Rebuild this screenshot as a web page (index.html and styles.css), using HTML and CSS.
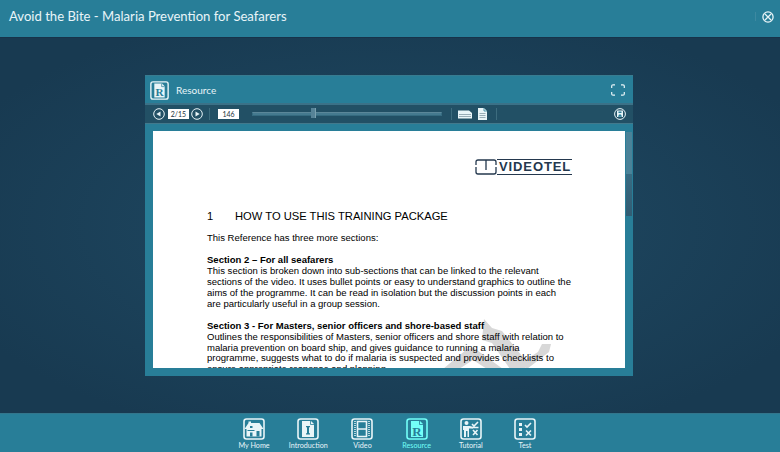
FILE: index.html
```html
<!DOCTYPE html>
<html lang="en">
<head>
<meta charset="utf-8">
<title>Avoid the Bite - Malaria Prevention for Seafarers</title>
<link rel="stylesheet" href="styles.css">
</head>
<body>
<header class="top"><h1>Avoid the Bite - Malaria Prevention for Seafarers</h1><i class="top-sep"></i>
<svg class="close" viewBox="0 0 12 12"><circle cx="6" cy="6" r="5.1"/><path d="M3 3l6 6M9 3l-6 6"/></svg></header>
<main>
<section class="panel">
<div class="panel-head">
<svg class="r-icon" viewBox="0 0 22 22"><use href="#resource"/></svg><h2>Resource</h2>
<svg class="full" viewBox="0 0 14 12"><path d="M4 .8H2Q.7.8.7 2v2M.7 8v2q0 1.2 1.3 1.2h2M10 .8h2q1.3 0 1.3 1.2v2M13.300 8v2q0 1.200-1.300 1.200h-2"/></svg>
</div>
<div class="tools">
<svg class="round" viewBox="0 0 12 12"><circle cx="6" cy="6" r="5.3"/><path class="solid" d="M3.300 6L7.500 3.400v5.200z"/></svg>
<span class="field">2/15</span>
<svg class="round" viewBox="0 0 12 12"><circle cx="6" cy="6" r="5.3"/><path class="solid" d="M8.700 6L4.500 3.400v5.200z"/></svg>
<i class="sep sep-a"></i><span class="field zoom">146</span>
<div class="slider"><i class="thumb"></i></div><i class="sep sep-b"></i>
<svg class="wide" viewBox="0 0 14 9"><path class="solid" d="M0 .5h11l3 2.500v5.500H0z"/><path class="rule" d="M1 4.500h12M1 6.500h12"/></svg>
<svg class="tall" viewBox="0 0 9 12"><path class="solid" d="M0 0h6l3 3v9H0z"/><path class="rule" d="M1.500 5.500h6M1.500 7.500h6M1.500 9.500h6"/><path class="fold" d="M6 0v3h3"/></svg>
<i class="sep sep-c"></i>
<svg class="round save" viewBox="0 0 12 12"><circle cx="6" cy="6" r="5.400"/><path class="solid" d="M3 2.500h6v6.500H3z"/><path class="ink" d="M4.500 3.500h3v1.500h-3zM4 8.800l1-2.300h2l1 2.300z"/></svg>
</div>
<div class="viewer">
<article class="sheet">
<svg class="mark" viewBox="0 0 115 50"><path d="M44 0l8 9 10 3 28 35-8 3h-12L52 24l-10-3zM3 50l24-20 7-1 7 5 22 16H47l-14-9-14 9zM80 44l18-11 4-8h9l-2 8-22 17z"/></svg>
<div class="logo"><svg viewBox="0 0 22 16"><path d="M1 6V3q0-2 2-2h16q2 0 2 2v3M1 8v5q0 2 2 2h16q2 0 2-2V8M11 1v10"/></svg><b>VIDEOTEL</b></div>
<h3><span>1</span>HOW TO USE THIS TRAINING PACKAGE</h3>
<p>This Reference has three more sections:</p>
<p><b>Section 2 – For all seafarers</b><br>This section is broken down into sub-sections that can be linked to the relevant<br>sections of the video. It uses bullet points or easy to understand graphics to outline the<br>aims of the programme. It can be read in isolation but the discussion points in each<br>are particularly useful in a group session.</p>
<p><b>Section 3 - For Masters, senior officers and shore-based staff</b><br>Outlines the responsibilities of Masters, senior officers and shore staff with relation to<br>malaria prevention on board ship, and gives guidance to running a malaria<br>programme, suggests what to do if malaria is suspected and provides checklists to<br>ensure appropriate response and planning.</p>
</article>
<div class="scroll"><i></i></div>
</div>
</section>
</main>
<nav>
<a><svg viewBox="0 0 22 22"><use href="#frame"/><path class="solid" d="M1.500 11L5.500 5V3.500H8V5h8.500l4 6z"/><path class="solid" d="M3.500 10h15v8.500h-15z"/><path class="ink" d="M7 8h2.500v2H7zM4.500 12h7v1h-7zM7 14.500h2.500v4H7zM13.500 13h3v5.500h-3z"/></svg>My Home</a>
<a><svg viewBox="0 0 22 22"><use href="#frame"/><path class="solid" d="M5 3h9l3 3v13H5z"/><path class="fold" d="M13.500 3v3.500H17"/><path class="ink" d="M9 8h4v1l-1 .5V15l1 .5v1H9v-1l1-.5V9.500L9 9z"/></svg>Introduction</a>
<a><svg viewBox="0 0 22 22"><use href="#frame"/><path class="line" d="M6.500 3.500h9v15h-9zM6.500 11h9"/><path class="dots" d="M4 3v16M18 3v16"/></svg>Video</a>
<a class="active"><svg viewBox="0 0 22 22"><g id="resource"><rect id="frame" class="line" x="1" y="1" width="20" height="20" rx="2.500"/><path class="solid" d="M5 3h9l3 3v13H5z"/><path class="fold" d="M13.500 3v3.500H17"/><text class="r" x="6.300" y="17.500">R</text></g></svg>Resource</a>
<a><svg viewBox="0 0 22 22"><use href="#frame"/><circle class="solid" cx="6.500" cy="5" r="2"/><path class="solid" d="M3 8h7l3 1v1.500H9V19H7.500v-6H6v6H4v-7H3z"/><path class="line" d="M12 6l2 2 4-4M13 12l4.500 5M17.500 12L13 17M11.500 9.500h7"/></svg>Tutorial</a>
<a><svg viewBox="0 0 22 22"><use href="#frame"/><path class="solid" d="M5 5h3v3H5zM5 10h3v3H5zM5 15h3v3H5z"/><path class="line" d="M11 7l2 2 4-4M12 12.500l5 5M17 12.500l-5 5"/></svg>Test</a>
</nav>
</body>
</html>
```
FILE: styles.css
```css
*{box-sizing:border-box}
body{margin:0;width:780px;height:452px;overflow:hidden;display:flex;flex-direction:column;font-family:Lato,sans-serif;color:#e9f5f8;background:#1a3b52}
h1,h2,h3,p{margin:0;font-weight:400}
svg{display:block;overflow:visible;fill:none;stroke:currentColor;flex:none}
.top{height:37px;flex:none;background:#287e98;display:flex;padding:0 6px 0 9px}
h1{font-size:13.1px;line-height:33px;white-space:nowrap}
.top-sep{width:1px;height:9px;margin:12px 6px 0 auto;background:#3d89a1}
.close{width:12px;height:12px;margin-top:11px;stroke-width:1.3}
main{height:376px;flex:none;padding:37px 0 0 145px;border-top:1px solid #17334a;background:radial-gradient(ellipse at center,#204b65,#183a51 85%)}
.panel{width:488px;height:301px;background:#287e98;border-top:1px solid #387c90}
.panel-head{height:27px;display:flex;align-items:center;padding:1px 8px 0 5px}
.r-icon{width:19px;height:19px}
h2{font-size:10px;margin:-1px 0 0 7px}
.full{width:14px;height:12px;margin-left:auto;stroke-width:1.2}
.tools{height:21px;background:#225065;border-top:2px solid #3b7187;border-bottom:1px solid #42798c;display:flex;align-items:center;padding:0 7px 0 8px}
.round{width:12px;height:12px;stroke-width:1}
.solid{fill:currentColor;stroke:none}
.ink{fill:#287e98;stroke:none}
.field{width:21px;height:10px;margin:0 2px 0 3px;background:#fff;color:#24333d;font-size:7px;line-height:10px;text-align:center}
.sep{width:1px;height:12px;background:#3d6c7e}
.sep-a{margin-left:6px}.zoom{margin:0 13px 0 8px}
.slider{width:190px;height:4px;border:1px solid #356b80;border-top-color:#5b8799;background:#457a8f;position:relative}
.thumb{position:absolute;left:58px;top:-5px;width:5px;height:10px;background:#568397;border-right:1px solid #79a0af}
.sep-b{margin-left:9px}.wide{width:14px;height:9px;margin-left:6px}.tall{width:9px;height:12px;margin-left:6px}.rule{stroke:#99adb6;stroke-width:1}.fold{stroke:#287e98;stroke-width:.8}.sep-c{margin-left:9px}.save{margin-left:auto}
.viewer{display:flex;padding:7px 0 0 8px}
.sheet{position:relative;width:472px;height:237px;overflow:hidden;background:#fff;color:#000;padding:28px 0 0 54px;font:9.53px/10.95px "Liberation Sans",sans-serif}
.sheet p{white-space:nowrap;margin-bottom:10.8px;position:relative}
.mark{position:absolute;left:287px;top:188px;width:115px;height:50px;fill:#d8d8d8;stroke:none}
.logo{display:flex;margin-left:268px;width:97px;height:16px;color:#24384e}
.logo svg{width:22px;height:16px;stroke-width:1.3}
.logo b{width:75px;height:16px;padding-left:2px;border:solid #24384e;border-width:1px 0;font-size:13px;line-height:14px;letter-spacing:.9px}
h3{font-size:11.2px;line-height:14px;margin:34px 0 10.3px;white-space:nowrap}
h3 span{display:inline-block;width:28px}
.scroll{width:8px;padding:1px 0 0 1px;height:237px}.scroll i{display:block;width:6px;height:84px;background:linear-gradient(#4a8298 0 50%,#386b82 50%,#315c73)}
nav{height:39px;background:#287e98;border-top:1px solid #33768c;display:flex;padding-left:227px}
nav a{width:54.2px;display:flex;flex-direction:column;align-items:center;padding-top:4px;font-size:7.200px;line-height:12px;white-space:nowrap}
nav svg{width:22px;height:22px}
.active{color:#73fff8}
.line,nav use{stroke-width:1.6}
.dots{stroke-width:1.5;stroke-dasharray:1 1}
.r{font:bold 13px "Liberation Serif",serif;fill:#287e98;stroke:none}
```
